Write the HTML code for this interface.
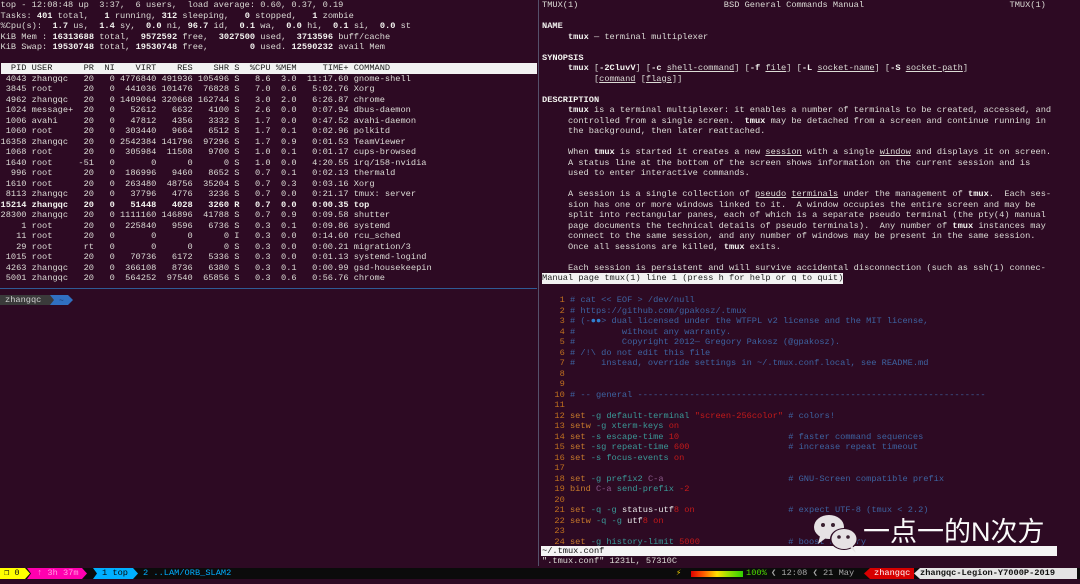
<!DOCTYPE html>
<html><head><meta charset="utf-8"><style>
html,body{margin:0;padding:0;}
body{width:1080px;height:584px;background:#2d0a23;position:relative;overflow:hidden;font-family:"Liberation Mono",monospace;}
pre{margin:0;position:absolute;font-family:"Liberation Mono",monospace;font-size:8.667px;line-height:10.5px;color:#dcdcd6;white-space:pre;}
b{color:#f4f4f0;}
.hl{background:#f2f2f2;color:#1a1a1a;display:inline-block;}
u{text-decoration:underline;}
.ln{color:#c0701f}.cm{color:#3d63a0}.kw{color:#c77a2c}.op{color:#3a9a98}.rd{color:#c41a1a}.pu{color:#8a5a8a}.wh{color:#e8e8e8}
.abs{position:absolute}
.sb{position:absolute;top:568px;height:11px;font-size:8.667px;line-height:11px;white-space:pre;font-family:"Liberation Mono",monospace;}
</style></head><body>
<pre style="left:0.5px;top:0;">top - 12:08:48 up  3:37,  6 users,  load average: 0.60, 0.37, 0.19
Tasks: <b>401</b> total,   <b>1</b> running, <b>312</b> sleeping,   <b>0</b> stopped,   <b>1</b> zombie
%Cpu(s):  <b>1.7</b> us,  <b>1.4</b> sy,  <b>0.0</b> ni, <b>96.7</b> id,  <b>0.1</b> wa,  <b>0.0</b> hi,  <b>0.1</b> si,  <b>0.0</b> st
KiB Mem : <b>16313688</b> total,  <b>9572592</b> free,  <b>3027500</b> used,  <b>3713596</b> buff/cache
KiB Swap: <b>19530748</b> total, <b>19530748</b> free,        <b>0</b> used. <b>12590232</b> avail Mem

<span class="hl" style="width:536px">  PID USER      PR  NI    VIRT    RES    SHR S  %CPU %MEM     TIME+ COMMAND</span>
 4043 zhangqc   20   0 4776840 491936 105496 S   8.6  3.0  11:17.60 gnome-shell
 3845 root      20   0  441036 101476  76828 S   7.0  0.6   5:02.76 Xorg
 4962 zhangqc   20   0 1409064 320668 162744 S   3.0  2.0   6:26.87 chrome
 1024 message+  20   0   52612   6632   4100 S   2.6  0.0   0:07.94 dbus-daemon
 1006 avahi     20   0   47812   4356   3332 S   1.7  0.0   0:47.52 avahi-daemon
 1060 root      20   0  303440   9664   6512 S   1.7  0.1   0:02.96 polkitd
16358 zhangqc   20   0 2542384 141796  97296 S   1.7  0.9   0:01.53 TeamViewer
 1068 root      20   0  305984  11508   9700 S   1.0  0.1   0:01.17 cups-browsed
 1640 root     -51   0       0      0      0 S   1.0  0.0   4:20.55 irq/158-nvidia
  996 root      20   0  186996   9460   8652 S   0.7  0.1   0:02.13 thermald
 1610 root      20   0  263480  48756  35204 S   0.7  0.3   0:03.16 Xorg
 8113 zhangqc   20   0   37796   4776   3236 S   0.7  0.0   0:21.17 tmux: server
<b>15214 zhangqc   20   0   51448   4028   3260 R   0.7  0.0   0:00.35 top</b>
28300 zhangqc   20   0 1111160 146896  41788 S   0.7  0.9   0:09.58 shutter
    1 root      20   0  225840   9596   6736 S   0.3  0.1   0:09.86 systemd
   11 root      20   0       0      0      0 I   0.3  0.0   0:14.60 rcu_sched
   29 root      rt   0       0      0      0 S   0.3  0.0   0:00.21 migration/3
 1015 root      20   0   70736   6172   5336 S   0.3  0.0   0:01.13 systemd-logind
 4263 zhangqc   20   0  366108   8736   6380 S   0.3  0.1   0:00.99 gsd-housekeepin
 5001 zhangqc   20   0  564252  97540  65856 S   0.3  0.6   0:56.76 chrome</pre>

<div class="abs" style="left:0;top:288px;width:537px;height:1px;background:#2f5a94"></div>
<div class="abs" style="left:538px;top:0;width:1px;height:566px;background:#55506a"></div>

<div class="abs" style="left:0;top:295px;width:50px;height:10px;background:#3a3a3a;color:#d0d0d0;font-size:8.667px;line-height:10px;padding-left:5px;box-sizing:border-box;">zhangqc</div>
<svg class="abs" style="left:50px;top:295px" width="24" height="10"><polygon points="0,0 18,0 23,5 18,10 0,10" fill="#3070c0"/><polygon points="0,0 4,5 0,10" fill="#3a3a3a"/><text x="9" y="8" font-size="8" fill="#1a3a6a" font-family="Liberation Mono">~</text></svg>

<pre style="left:542px;top:0;">TMUX(1)                            BSD General Commands Manual                            TMUX(1)

<b>NAME</b>
     <b>tmux</b> — terminal multiplexer

<b>SYNOPSIS</b>
     <b>tmux</b> [<b>-2CluvV</b>] [<b>-c</b> <u>shell-command</u>] [<b>-f</b> <u>file</u>] [<b>-L</b> <u>socket-name</u>] [<b>-S</b> <u>socket-path</u>]
          [<u>command</u> [<u>flags</u>]]

<b>DESCRIPTION</b>
     <b>tmux</b> is a terminal multiplexer: it enables a number of terminals to be created, accessed, and
     controlled from a single screen.  <b>tmux</b> may be detached from a screen and continue running in
     the background, then later reattached.

     When <b>tmux</b> is started it creates a new <u>session</u> with a single <u>window</u> and displays it on screen.
     A status line at the bottom of the screen shows information on the current session and is
     used to enter interactive commands.

     A session is a single collection of <u>pseudo</u> <u>terminals</u> under the management of <b>tmux</b>.  Each ses‐
     sion has one or more windows linked to it.  A window occupies the entire screen and may be
     split into rectangular panes, each of which is a separate pseudo terminal (the pty(4) manual
     page documents the technical details of pseudo terminals).  Any number of <b>tmux</b> instances may
     connect to the same session, and any number of windows may be present in the same session.
     Once all sessions are killed, <b>tmux</b> exits.

     Each session is persistent and will survive accidental disconnection (such as ssh(1) connec‐
<span class="hl">Manual page tmux(1) line 1 (press h for help or q to quit)</span></pre>

<pre style="left:544px;top:295px;"><span class="ln">   1</span> <span class="cm"># cat &lt;&lt; EOF &gt; /dev/null</span>
<span class="ln">   2</span> <span class="cm"># https://github.com/gpakosz/.tmux</span>
<span class="ln">   3</span> <span class="cm"># (‑<span style="color:#2f7fd0">●●</span>&gt; dual licensed under the WTFPL v2 license and the MIT license,</span>
<span class="ln">   4</span> <span class="cm">#         without any warranty.</span>
<span class="ln">   5</span> <span class="cm">#         Copyright 2012— Gregory Pakosz (@gpakosz).</span>
<span class="ln">   6</span> <span class="cm"># /!\ do not edit this file</span>
<span class="ln">   7</span> <span class="cm">#     instead, override settings in ~/.tmux.conf.local, see README.md</span>
<span class="ln">   8</span>
<span class="ln">   9</span>
<span class="ln">  10</span> <span class="cm"># -- general -------------------------------------------------------------------</span>
<span class="ln">  11</span>
<span class="ln">  12</span> <span class="kw">set</span> <span class="op">-g default-terminal</span> <span class="rd">"screen-256color"</span> <span class="cm"># colors!</span>
<span class="ln">  13</span> <span class="kw">setw</span> <span class="op">-g xterm-keys</span> <span class="rd">on</span>
<span class="ln">  14</span> <span class="kw">set</span> <span class="op">-s escape-time</span> <span class="rd">10</span>                     <span class="cm"># faster command sequences</span>
<span class="ln">  15</span> <span class="kw">set</span> <span class="op">-sg repeat-time</span> <span class="rd">600</span>                   <span class="cm"># increase repeat timeout</span>
<span class="ln">  16</span> <span class="kw">set</span> <span class="op">-s focus-events</span> <span class="rd">on</span>
<span class="ln">  17</span>
<span class="ln">  18</span> <span class="kw">set</span> <span class="op">-g prefix2</span> <span class="pu">C-a</span>                        <span class="cm"># GNU-Screen compatible prefix</span>
<span class="ln">  19</span> <span class="kw">bind</span> <span class="pu">C-a</span> <span class="op">send-prefix</span> <span class="rd">-2</span>
<span class="ln">  20</span>
<span class="ln">  21</span> <span class="kw">set</span> <span class="op">-q -g</span> <span class="wh">status-utf</span><span class="rd">8 on</span>                  <span class="cm"># expect UTF-8 (tmux &lt; 2.2)</span>
<span class="ln">  22</span> <span class="kw">setw</span> <span class="op">-q -g</span> <span class="wh">utf</span><span class="rd">8 on</span>
<span class="ln">  23</span>
<span class="ln">  24</span> <span class="kw">set</span> <span class="op">-g history-limit</span> <span class="rd">5000</span>                 <span class="cm"># boost history</span></pre>

<div class="abs" style="left:541px;top:546px;width:516px;height:10px;background:#f4f4f4;"></div>
<pre style="left:542px;top:546px;color:#111;line-height:10px;">~/.tmux.conf</pre>
<pre style="left:542px;top:556px;">".tmux.conf" 1231L, 57310C</pre>

<svg class="abs" style="left:812px;top:512px" width="60" height="42">
<ellipse cx="17" cy="15" rx="15" ry="12" fill="#e6e2e4"/><polygon points="8,24 6,32 14,26" fill="#e6e2e4"/>
<circle cx="11" cy="13" r="2" fill="#3a2030"/><circle cx="21" cy="13" r="2" fill="#3a2030"/>
<ellipse cx="32" cy="27" rx="14" ry="11" fill="#2d0a23"/>
<ellipse cx="32" cy="27" rx="12.5" ry="10" fill="#e6e2e4"/><polygon points="38,35 44,41 40,33" fill="#e6e2e4"/>
<circle cx="27" cy="25" r="1.8" fill="#3a2030"/><circle cx="36" cy="25" r="1.8" fill="#3a2030"/>
</svg>
<div class="abs" style="left:863px;top:515px;font-family:'Liberation Sans','Noto Sans CJK SC',sans-serif;font-size:27px;line-height:34px;color:#fafafa;">一点一的N次方</div>

<div class="abs" style="left:0;top:568px;width:1080px;height:11px;background:#0b0b0b;"></div>
<svg class="abs" style="left:0;top:568px" width="145" height="11">
<polygon points="0,0 25,0 30,5.5 25,11 0,11" fill="#ffff00"/>
<polygon points="27,0 82,0 87,5.5 82,11 27,11 31,5.5" fill="#ff00af"/>
<polygon points="93,0 133,0 138,5.5 133,11 93,11 97,5.5" fill="#00afff"/>
</svg>
<div class="sb" style="left:4px;color:#111;">❐ 0</div>
<div class="sb" style="left:37px;color:#ff9ee0;">↑ 3h 37m</div>
<div class="sb" style="left:102px;color:#0a0a0a;">1 top</div>
<div class="sb" style="left:143px;color:#00afff;">2 ..LAM/ORB_SLAM2</div>

<div class="sb" style="left:676px;color:#f0d000;">⚡</div>
<div class="abs" style="left:691px;top:571px;width:52px;height:6px;background:linear-gradient(90deg,#e00000,#ff6000 25%,#ffe000 50%,#a0e000 70%,#30d000);"></div>
<div class="sb" style="left:746px;color:#50e000;">100%</div>
<div class="sb" style="left:771px;color:#a8a8a8;">❮ 12:08 ❮ 21 May</div>
<svg class="abs" style="left:864px;top:568px" width="216" height="11">
<polygon points="6,0 50,0 50,11 6,11 0,5.5" fill="#d70000"/>
<polygon points="56,0 213,0 213,11 56,11 50,5.5" fill="#e4e4e4"/>
</svg>
<div class="sb" style="left:874px;color:#fff;">zhangqc</div>
<div class="sb" style="left:920px;color:#111;font-weight:bold;">zhangqc-Legion-Y7000P-2019</div>
</body></html>
